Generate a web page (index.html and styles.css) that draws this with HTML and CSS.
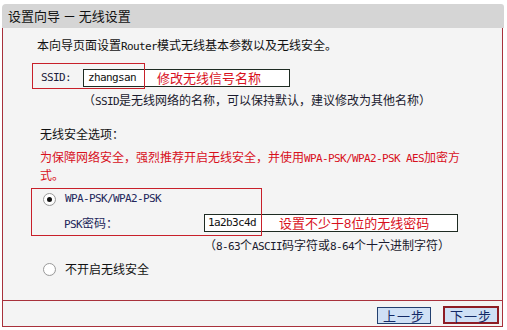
FILE: index.html
```html
<!DOCTYPE html>
<html lang="zh-CN">
<head>
<meta charset="utf-8">
<title>设置向导 - 无线设置</title>
<link rel="stylesheet" href="styles.css">
</head>
<body>
<div class="panel">
  <div class="title">设置向导 － 无线设置</div>
  <div class="content">
    <p class="intro">本向导页面设置<span class="m">Router</span>模式无线基本参数以及无线安全。</p>

    <div class="row ssid-row">
      <span class="label-ssid m">SSID:</span>
      <div class="field field-ssid">
        <span class="m value">zhangsan</span>
        <span class="note note-ssid">修改无线信号名称</span>
      </div>
    </div>
    <p class="hint hint-ssid">（<span class="m">SSID</span>是无线网络的名称，可以保持默认，建议修改为其他名称）</p>

    <p class="section">无线安全选项：</p>
    <p class="warn">为保障网络安全，强烈推荐开启无线安全，并使用<span class="m">WPA-PSK/WPA2-PSK AES</span>加密方式。</p>

    <div class="row radio-row radio-wpa">
      <span class="radio checked"></span>
      <span class="m navy">WPA-PSK/WPA2-PSK</span>
    </div>
    <div class="row psk-row">
      <span class="label-psk navy"><span class="m">PSK</span>密码：</span>
      <div class="field field-psk">
        <span class="m value">1a2b3c4d</span>
        <span class="note note-psk">设置不少于<span class="num">8</span>位的无线密码</span>
      </div>
    </div>
    <p class="hint hint-psk">（<span class="m">8-63</span>个<span class="m">ASCII</span>码字符或<span class="m">8-64</span>个十六进制字符）</p>

    <div class="row radio-row radio-none">
      <span class="radio"></span>
      <span>不开启无线安全</span>
    </div>

    <div class="mark mark-ssid"></div>
    <div class="mark mark-wpa"></div>
  </div>
  <div class="footer">
    <button class="btn" type="button">上一步</button>
    <button class="btn btn-next" type="button">下一步</button>
  </div>
</div>
</body>
</html>
```

FILE: styles.css
```css
html, body {
  margin: 0;
  padding: 0;
  background: #ffffff;
}

body {
  font-family: "Noto Sans CJK SC", "Noto Sans", sans-serif;
  font-size: 12px;
  line-height: 18px;
  color: #111111;
}

p {
  margin: 0;
}

.m {
  font-family: "DejaVu Sans Mono", "Liberation Mono", monospace;
  font-size: 11px;
  line-height: 10px;
  letter-spacing: -0.62px;
}

.panel {
  margin: 4px 0 0 2px;
  width: 502px;
}

.title {
  height: 24px;
  line-height: 24px;
  background: #d5d5d5;
  border-radius: 4px 3px 0 0;
  padding-left: 6px;
  font-size: 13px;
  color: #111111;
}

.content {
  position: relative;
  width: 501px;
  height: 272px;
  box-sizing: border-box;
  background: #f4f4f4;
  border-left: 1px solid #a8313b;
  border-right: 1px solid #a8313b;
  overflow: hidden;
}

.intro {
  margin: 8px 0 0 34px;
  height: 18px;
  white-space: nowrap;
}

.row {
  display: flex;
  align-items: center;
  white-space: nowrap;
}

.ssid-row {
  margin: 15px 0 0 38px;
  height: 18px;
}

.label-ssid {
  width: 42px;
  color: #1b1b3a;
}

.field {
  display: flex;
  align-items: center;
  height: 18px;
  box-sizing: border-box;
  background: #ffffff;
  border: 1px solid #1e2b22;
}

.field-ssid {
  width: 207px;
  padding-left: 4px;
}

.value {
  color: #111111;
}

.note {
  color: #d8101c;
  font-size: 13px;
}

.note-ssid {
  margin-left: 21px;
}

.hint {
  white-space: nowrap;
  height: 18px;
  color: #1a1a2e;
}

.hint-ssid {
  margin: 4px 0 0 80px;
}

.section {
  margin: 16px 0 0 37px;
  height: 18px;
}

.warn {
  margin: 5px 0 0 37px;
  width: 426px;
  height: 36px;
  color: #d8101c;
}

.radio-row {
  height: 18px;
}

.radio-wpa {
  margin: 6px 0 0 40px;
}

.radio {
  width: 11px;
  height: 11px;
  border-radius: 50%;
  border: 1px solid #9a9a9a;
  background: radial-gradient(circle at 40% 40%, #ffffff 0%, #ffffff 55%, #e6e6e6 100%);
  margin-right: 9px;
  position: relative;
  flex: none;
}

.radio.checked::after {
  content: "";
  position: absolute;
  left: 3px;
  top: 3px;
  width: 5px;
  height: 5px;
  border-radius: 50%;
  background: #111111;
}

.navy {
  color: #23265a;
}

.psk-row {
  margin: 6px 0 0 61px;
  height: 18px;
}

.label-psk {
  width: 140px;
}

.field-psk {
  width: 254px;
  padding-left: 3px;
}

.note-psk {
  margin-left: 23px;
}

.num {
  font-family: "Liberation Sans", sans-serif;
}

.hint-psk {
  margin: 4px 0 0 201px;
}

.radio-none {
  margin: 6px 0 0 40px;
}

.mark {
  position: absolute;
  border: 1px solid #c8202a;
  pointer-events: none;
}

.mark-ssid {
  left: 29px;
  top: 35px;
  width: 111px;
  height: 24px;
}

.mark-wpa {
  left: 28px;
  top: 160px;
  width: 229px;
  height: 46px;
}

.footer {
  width: 501px;
  height: 27px;
  box-sizing: border-box;
  background: #f4f4f4;
  border: 1px solid #a8313b;
  display: flex;
  justify-content: flex-end;
  align-items: flex-start;
  gap: 12px;
  padding: 5px 3px 0 0;
}

.btn {
  width: 54px;
  height: 17px;
  padding: 0;
  margin: 1px 0 0 0;
  box-sizing: border-box;
  background: #cfe0f5;
  border: 1px solid #23406f;
  font-family: "Noto Sans CJK SC", sans-serif;
  font-size: 13px;
  line-height: 15px;
  color: #142a66;
  letter-spacing: 1px;
}

.btn-next {
  width: 56px;
  height: 18px;
  margin-top: 0;
  border: 2px solid #8e1c24;
}
```
